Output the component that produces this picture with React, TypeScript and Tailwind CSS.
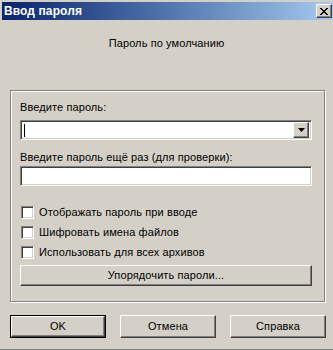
import React from "react";

const raised =
  "bg-[#d4d0c8] border border-t-white border-l-white border-r-[#404040] border-b-[#404040] shadow-[inset_-1px_-1px_0_#808080,inset_1px_1px_0_#d4d0c8]";
const sunken =
  "bg-white border border-t-[#808080] border-l-[#808080] border-r-white border-b-white shadow-[inset_1px_1px_0_#404040,inset_-1px_-1px_0_#d4d0c8]";

function CheckRow({ label }: { label: string }) {
  return (
    <div className="flex items-center h-[20px]">
      <div className={`w-[13px] h-[13px] ${sunken}`} />
      <span className="ml-[5px]">{label}</span>
    </div>
  );
}

export default function App() {
  return (
    <div
      className="w-[333px] h-[350px] bg-[#d4d0c8] pl-[2px] pt-[2px] overflow-hidden text-black text-[11px] leading-[13px] tracking-[0.1px] border-b border-b-[#808080]"
      style={{ fontFamily: '"Liberation Sans", Arial, sans-serif' }}
    >
      {/* title bar */}
      <div className="h-[18px] w-[331px] flex items-center justify-between pl-[2px] pr-[1px] bg-gradient-to-r from-[#0a246a] to-[#a6caf0]">
        <span className="text-white font-bold text-[12px]">Ввод пароля</span>
        <div className={`w-[16px] h-[14px] flex items-center justify-center ${raised}`}>
          <svg width="8" height="7" viewBox="0 0 8 7">
            <path d="M0 0h2v1h1v1h2V1h1V0h2v1H7v1H6v1H5v1h1v1h1v1h1v1H6V6H5V5H3v1H2v1H0V6h1V5h1V4h1V3H2V2H1V1H0z" fill="#000" />
          </svg>
        </div>
      </div>

      <div className="mt-[17px] text-center pr-[2px]">Пароль по умолчанию</div>

      {/* group */}
      <div className="ml-[8px] mt-[40px] w-[315px] h-[212px] border border-[#808080] shadow-[inset_1px_1px_0_#fff,1px_1px_0_#fff] pl-[9px] pr-[12px]">
        <div className="mt-[10px]">Введите пароль:</div>
        <div className={`mt-[6px] h-[20px] flex items-center justify-between pl-[3px] pr-[2px] ${sunken}`}>
          <div className="w-[1px] h-[13px] bg-black" />
          <div className={`w-[16px] h-[16px] flex items-center justify-center ${raised}`}>
            <svg width="7" height="4" viewBox="0 0 7 4">
              <path d="M0 0h7L3.5 4z" fill="#000" />
            </svg>
          </div>
        </div>
        <div className="mt-[11px]">Введите пароль ещё раз (для проверки):</div>
        <div className={`mt-[2px] h-[20px] ${sunken}`} />
        <div className="mt-[16px] ml-[1px] flex flex-col">
          <CheckRow label="Отображать пароль при вводе" />
          <CheckRow label="Шифровать имена файлов" />
          <CheckRow label="Использовать для всех архивов" />
        </div>
        <div className={`mt-[3px] h-[21px] flex items-center justify-center ${raised}`}>
          Упорядочить пароли...
        </div>
      </div>

      {/* buttons */}
      <div className="mt-[13px] ml-[8px] flex gap-[14px]">
        <div className="w-[96px] h-[23px] border border-black">
          <div className={`w-full h-full flex items-center justify-center ${raised}`}>OK</div>
        </div>
        <div className={`w-[96px] h-[23px] flex items-center justify-center ${raised}`}>Отмена</div>
        <div className={`w-[96px] h-[23px] flex items-center justify-center ${raised}`}>Справка</div>
      </div>
    </div>
  );
}
